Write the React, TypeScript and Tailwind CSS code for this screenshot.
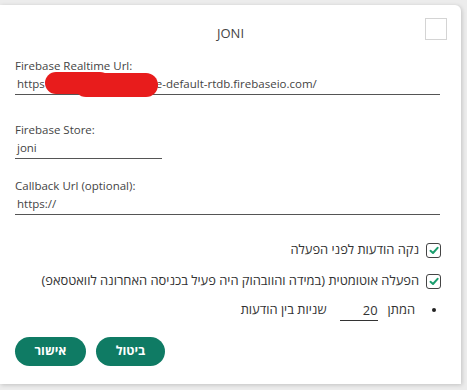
import React from "react";

function Check() {
  return (
    <span className="w-[15px] h-[15px] border-[1.5px] border-[#444] rounded-[3px] flex items-center justify-center bg-white shrink-0">
      <svg width="10" height="9" viewBox="0 0 10 9">
        <path d="M1.5 4.8 L4 7 L8.6 1.8" fill="none" stroke="#1b9e6e" strokeWidth="2" strokeLinecap="round" strokeLinejoin="round" />
      </svg>
    </span>
  );
}

export default function App() {
  return (
    <div
      className="w-[467px] h-[390px] bg-[#ececec] overflow-hidden text-[#333]"
      style={{ fontFamily: '"Open Sans", "Noto Sans", "DejaVu Sans", sans-serif' }}
    >
      <div className="mt-[5px] w-[461px] h-[379px] bg-white rounded-tr-[6px] shadow-[1px_1px_4px_rgba(0,0,0,0.18)] px-[15px] pt-[18px] relative">
        <div className="relative h-[20px] flex items-center justify-center text-[13px] leading-[20px] text-[#444]">
          JONI
          <span className="absolute right-[-1px] top-[-5px] w-[22px] h-[22px] border border-[#d4d4d4] bg-white" />
        </div>

        <div className="mt-[15px] text-[11.5px] leading-[16px] text-[#444]">Firebase Realtime Url:</div>
        <div className="relative w-[425px] h-[21px] border-b border-[#555] flex items-center pl-[2px] text-[11.5px] text-[#444]">
          <span>https</span>
          <span className="inline-block w-[111px]" />
          <span>e-default-rtdb.firebaseio.com/</span>
          <svg className="absolute left-[29px] top-[-3px]" width="115" height="28" viewBox="0 0 115 28">
            <rect x="1" y="1" width="66" height="22" rx="11" fill="#e81c1c" />
            <rect x="30" y="2" width="84" height="24" rx="12" fill="#e81c1c" />
            <rect x="20" y="5" width="60" height="18" fill="#e81c1c" />
          </svg>
        </div>

        <div className="mt-[27px] text-[11.5px] leading-[16px] text-[#444]">Firebase Store:</div>
        <div className="w-[147px] h-[21px] border-b border-[#555] flex items-center pl-[2px] text-[11.5px] text-[#444]">joni</div>

        <div className="mt-[19px] text-[11.5px] leading-[16px] text-[#444]">Callback Url (optional):</div>
        <div className="w-[425px] h-[21px] border-b border-[#555] flex items-center pl-[2px] text-[11.5px] text-[#444]">https://</div>

        <div dir="rtl" className="w-[430px] mt-[26px] flex flex-col text-[12.9px] text-[#333]">
          <div className="h-[18px] flex items-center gap-[7px] pr-[4px]">
            <Check />
            <span>נקה הודעות לפני הפעלה</span>
          </div>
          <div className="mt-[13px] h-[18px] flex items-center gap-[7px] pr-[4px]">
            <Check />
            <span>הפעלה אוטומטית (במידה והוובהוק היה פעיל בכניסה האחרונה לוואטסאפ)</span>
          </div>
          <div className="mt-[11px] h-[18px] flex items-center pr-[9px]">
            <span className="w-[4px] h-[4px] rounded-full bg-[#222]" />
            <span className="mr-[17px]">המתן</span>
            <span className="mr-[10px] w-[38px] h-[22px] border-b border-[#333] flex items-center pt-[2px] pl-[7px]">
              <span dir="ltr">20</span>
            </span>
            <span className="mr-[13px]">שניות בין הודעות</span>
          </div>
        </div>

        <div className="mt-[18px] flex gap-[10px]">
          <button className="w-[71px] h-[29px] rounded-full bg-[#0f7b64] text-white text-[12.5px] font-bold flex items-center justify-center">
            אישור
          </button>
          <button className="w-[69px] h-[29px] rounded-full bg-[#0f7b64] text-white text-[12.5px] font-bold flex items-center justify-center">
            ביטול
          </button>
        </div>
      </div>
    </div>
  );
}
